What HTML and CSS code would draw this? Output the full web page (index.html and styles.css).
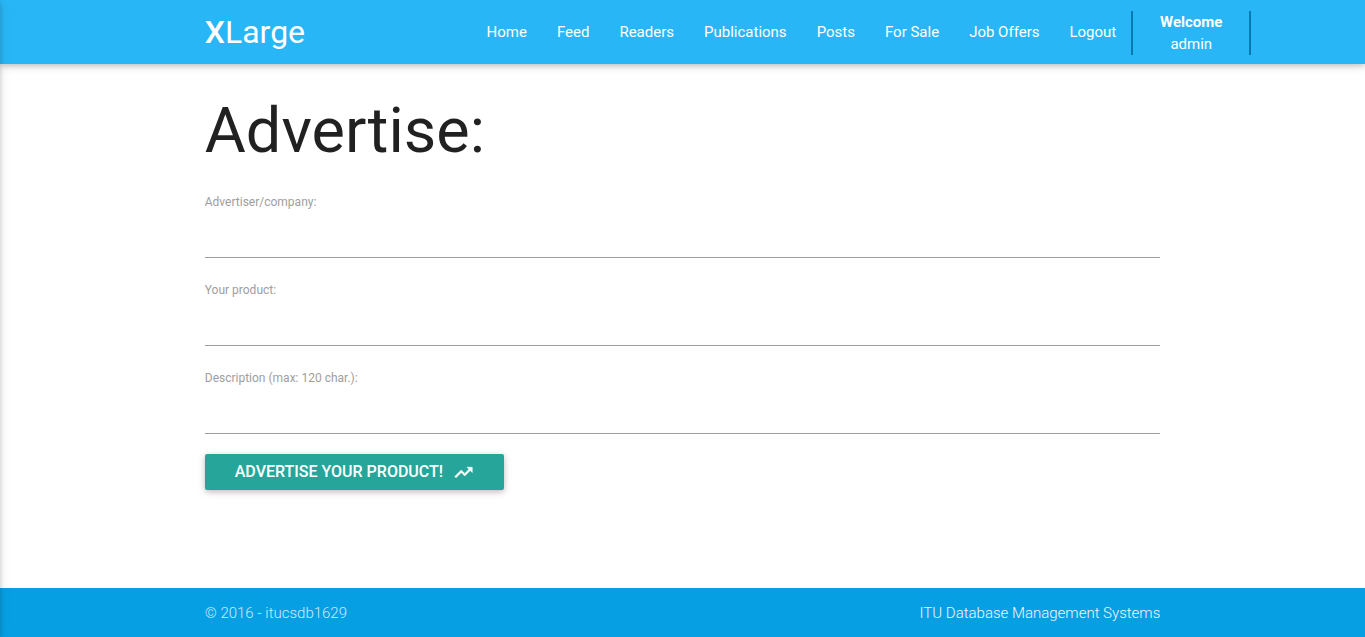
FILE: index.html
```html
<!DOCTYPE html>
<html lang="en">
<head>
<meta charset="utf-8">
<meta name="viewport" content="width=device-width, initial-scale=1">
<title>XLarge</title>
<link rel="stylesheet" href="styles.css">
</head>
<body>
<header class="navbar">
  <div class="container navbar-inner">
    <a class="brand" href="#"><b>X</b>Large</a>
    <nav class="nav-links">
      <a href="#">Home</a>
      <a href="#">Feed</a>
      <a href="#">Readers</a>
      <a href="#">Publications</a>
      <a href="#">Posts</a>
      <a href="#">For Sale</a>
      <a href="#">Job Offers</a>
      <a href="#">Logout</a>
      <div class="welcome"><b>Welcome</b><span>admin</span></div>
    </nav>
  </div>
</header>
<main class="container content">
  <h1>Advertise:</h1>
  <form class="form">
    <div class="field">
      <label for="company">Advertiser/company:</label>
      <input id="company" type="text">
    </div>
    <div class="field">
      <label for="product">Your product:</label>
      <input id="product" type="text">
    </div>
    <div class="field">
      <label for="description">Description (max: 120 char.):</label>
      <input id="description" type="text" maxlength="120">
    </div>
    <button class="btn" type="submit">Advertise your product!
      <svg class="btn-icon" viewBox="0 0 24 24" aria-hidden="true"><path d="M16 6l2.29 2.29-4.88 4.88-4-4L2 16.59 3.41 18l6-6 4 4 6.3-6.29L22 12V6z"/></svg>
    </button>
  </form>
</main>
<footer class="footer">
  <div class="container footer-inner">
    <span class="copyright">© 2016 - itucsdb1629</span>
    <a class="footer-link" href="#">ITU Database Management Systems</a>
  </div>
</footer>
<div class="drawer"></div>
</body>
</html>
```
FILE: styles.css
```css
* { box-sizing: border-box; }
body {
  margin: 0;
  min-height: 100vh;
  display: flex;
  flex-direction: column;
  font: 400 15px/22px Roboto, sans-serif;
  color: rgba(0, 0, 0, 0.87);
  background: #fff;
}
a { color: inherit; text-decoration: none; }
b { font-weight: 700; }
.container { width: 70%; margin: 0 auto; }
.navbar {
  background: #29b6f6;
  color: #fff;
  box-shadow: 0 2px 5px 0 rgba(0, 0, 0, 0.16), 0 2px 10px 0 rgba(0, 0, 0, 0.12);
}
.navbar-inner {
  display: flex;
  justify-content: space-between;
  align-items: center;
  height: 64px;
}
.brand { font-size: 32px; line-height: 64px; }
.brand b { font-weight: 500; }
.nav-links {
  display: flex;
  align-items: center;
  margin-right: -91px;
  white-space: nowrap;
}
.nav-links a { padding: 0 15px; line-height: 64px; }
.welcome {
  display: flex;
  flex-direction: column;
  align-items: center;
  width: 120px;
  margin-top: 2px;
  border: solid #067ab0;
  border-width: 0 2px;
}
.content { flex: 1 0 auto; }
h1 {
  margin: 32px 0 25px;
  font-size: 63px;
  font-weight: 400;
  line-height: 69px;
}
.form { padding-bottom: 40px; }
.field { display: flex; flex-direction: column; margin-bottom: 20px; }
.field label { font-size: 12px; line-height: 24px; color: #9e9e9e; }
.field input {
  width: 100%;
  height: 44px;
  padding: 0;
  border: 0;
  border-bottom: 1px solid #9e9e9e;
  border-radius: 0;
  background: transparent;
  font: inherit;
  outline: none;
}
.btn {
  display: inline-flex;
  align-items: center;
  gap: 10px;
  height: 36px;
  padding: 0 30px;
  border: 0;
  border-radius: 2px;
  background: #26a69a;
  color: #fff;
  font: 500 16px/36px Roboto, sans-serif;
  text-transform: uppercase;
  box-shadow: 0 2px 5px 0 rgba(0, 0, 0, 0.16), 0 2px 10px 0 rgba(0, 0, 0, 0.12);
}
.btn-icon { width: 21px; height: 21px; fill: currentColor; stroke: currentColor; stroke-width: 0.6; }
.footer { padding-top: 2px; background: #079fe4; font-weight: 300; line-height: 47px; }
.footer-inner { display: flex; justify-content: space-between; }
.copyright { color: rgba(255, 255, 255, 0.8); }
.footer-link { color: #f5f5f5; }
.drawer {
  position: fixed;
  top: 0;
  bottom: 0;
  left: -240px;
  width: 240px;
  box-shadow: 0 2px 5px 0 rgba(0, 0, 0, 0.16), 0 2px 10px 0 rgba(0, 0, 0, 0.12);
}
```
